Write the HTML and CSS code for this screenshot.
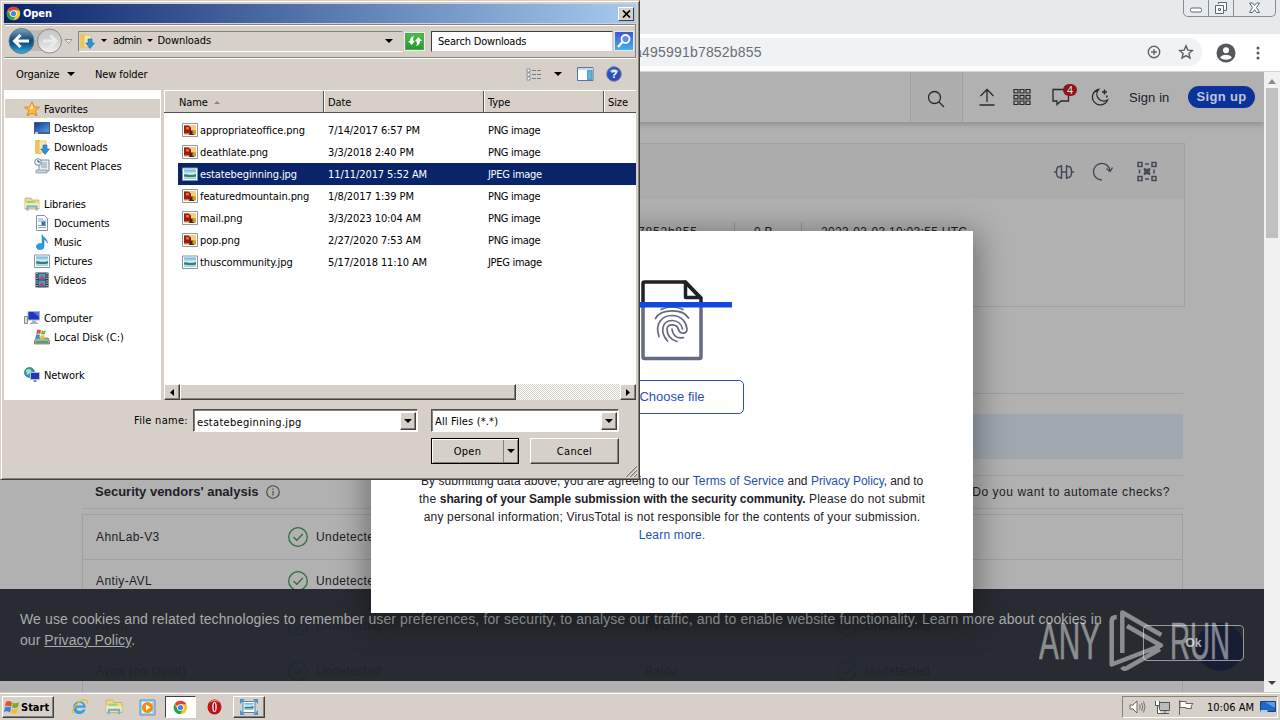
FILE: index.html
```
<!DOCTYPE html>
<html lang="en">
<head>
<meta charset="utf-8">
<title>Open</title>
<link rel="stylesheet" href="styles.css">
</head>
<body>
<svg class="defs" width="0" height="0" aria-hidden="true">
  <defs>
    <linearGradient id="gBack" x1="0" y1="0" x2="0" y2="1"><stop offset="0" stop-color="#7fa6bd"/><stop offset=".45" stop-color="#174a75"/><stop offset=".6" stop-color="#0d548c"/><stop offset="1" stop-color="#35b4e0"/></linearGradient>
    <linearGradient id="gFwd" x1="0" y1="0" x2="0" y2="1"><stop offset="0" stop-color="#c6c6c6"/><stop offset=".5" stop-color="#d2d2d2"/><stop offset="1" stop-color="#f4f4f4"/></linearGradient>
    <linearGradient id="gScreen" x1="0" y1="0" x2="1" y2="1"><stop offset="0" stop-color="#123a8c"/><stop offset="1" stop-color="#5aa6ee"/></linearGradient>
    <linearGradient id="gPic" x1="0" y1="0" x2="0" y2="1"><stop offset="0" stop-color="#5fb0dc"/><stop offset=".5" stop-color="#e4f6f7"/><stop offset="1" stop-color="#8fd0e0"/></linearGradient>
    <symbol id="chrome" viewBox="0 0 16 16">
      <circle cx="8" cy="8" r="7.200" fill="#f6c92b"/>
      <path d="M8 8 1.700 4.400A7.200 7.200 0 0 1 14.300 4.600H8z" fill="#dc4437"/>
      <path d="M1.700 4.400A7.200 7.200 0 0 0 7.600 15.200L10.600 10 5.200 10z" fill="#2c9e55"/>
      <circle cx="8" cy="8" r="3.600" fill="#fff"/><circle cx="8" cy="8" r="2.800" fill="#4a86e0"/>
    </symbol>
    <symbol id="dl" viewBox="0 0 16 16">
      <path d="M1 1h5l1 2v12H1z" fill="#e9c765"/><path d="M5 2h7v12H5z" fill="#f7e7a5" stroke="#d9b74f" stroke-width=".6"/>
      <path d="M9 6h4v4h2.500L11 15.500 6.700 10H9z" fill="#2c93de" stroke="#1a68b0" stroke-width=".6"/>
    </symbol>
    <symbol id="star" viewBox="0 0 16 16"><path d="m8 .8 2.200 5 5.300.4-4 3.500 1.300 5.300L8 12.200 3.300 15l1.200-5.300L.5 6.200l5.300-.4z" fill="#fbb93c" stroke="#d9791c" stroke-width=".8"/><path d="m8 3 1.300 3.500L8 9 5.500 7z" fill="#ffe49a"/></symbol>
    <symbol id="desk" viewBox="0 0 16 16"><path d="M.5 2.500h15v11H.5z" fill="url(#gScreen)" stroke="#44597c"/><path d="M0 12h16v2H0z" fill="#48627f"/><path d="M1 12h3v2H1z" fill="#a8d8e8"/></symbol>
    <symbol id="recent" viewBox="0 0 16 16"><path d="M5 2h10v11H5z" fill="#e7eef4" stroke="#7c8d9c"/><path d="M7 5h6M7 7h6M7 9h6" stroke="#7ea0bc"/><path d="M2 12h11v3H2z" fill="#c8d3dc" stroke="#7c8d9c" stroke-width=".7"/><circle cx="4" cy="4" r="3.300" fill="#eef4f8" stroke="#75869a"/><path d="M4 2v2h2" fill="none" stroke="#345"/></symbol>
    <symbol id="lib" viewBox="0 0 16 16"><path d="M1 2h6l1 2h7v9H1z" fill="#efd98a" stroke="#c2a855" stroke-width=".7"/><path d="M3 5h8v2H3z" fill="#9bd07f"/><path d="M1 7h14v5H1z" fill="#f7e9ad"/><path d="M3.500 14.500V10.500h9v4" fill="none" stroke="#6fb3da" stroke-width="2"/></symbol>
    <symbol id="doc" viewBox="0 0 16 16"><path d="M2.500.5h8l3 3v12h-11z" fill="#fbfdff" stroke="#8593a2"/><path d="M4 4h5M4 6h8M4 10.500h8M4 12.500h8" stroke="#8ea6bd"/><path d="M7.500 6.500h4v4h-4z" fill="#3b6fae"/></symbol>
    <symbol id="music" viewBox="0 0 16 16"><path d="M8 .5c1 3 5 3.500 5.500 8.500-1-2-2-3-3.500-3.400v6.900A3.800 3.200 0 1 1 8 9.800z" fill="#2f9be0" stroke="#1d70b4" stroke-width=".5"/></symbol>
    <symbol id="pic" viewBox="0 0 16 16"><path d="M.5 2h15v12.500H.5z" fill="#fff" stroke="#7f97a3"/><path d="M2 3.500h12V13H2z" fill="url(#gPic)"/><path d="M2 8.500c3-1 4 1.500 12-.5v2.500c-4 1-8 .5-12 0z" fill="#397d79"/></symbol>
    <symbol id="vid" viewBox="0 0 16 16"><path d="M1.500.5h13v15h-13z" fill="#2c3440"/><path d="M4.500 1.500h7v6h-7zM4.500 8.500h7v6h-7z" fill="#4f9cd0"/><path d="m5 7 3-4 3 4zM5 14l3-4 3 4z" fill="#b44d50"/><path d="M3 1v15M13 1v15" stroke="#dfe6ea" stroke-width="1.200" stroke-dasharray="1.200 1.200"/></symbol>
    <symbol id="comp" viewBox="0 0 16 16"><path d="M4 1.500h11.500v8.500H4z" fill="#1f35c4" stroke="#aab4c0"/><path d="m9 2 6 0v5z" fill="#4c71ea"/><path d="M8 10.500h4v2h2v1.500H6v-1.500h2z" fill="#a8b0bb"/><path d="M.5 6.500h3v7h-3z" fill="#dfe3d0" stroke="#80907c"/></symbol>
    <symbol id="disk" viewBox="0 0 16 16"><path d="M2 9h12l1.500 3v3H.5v-3z" fill="#9fb2a3" stroke="#5d7062" stroke-width=".7"/><path d="M2 12h12v2H2z" fill="#5a9d68"/><path d="M3 1q2-1 4 .2L6.300 5Q4.500 4 2.300 5z" fill="#e5552d"/><path d="M7.800 1.500q2 1 4-.2L11 5q-2 1-4 .2z" fill="#78b93e"/><path d="M2 5.700q2-1 4 .2L5.300 9.500q-2-1-4 0z" fill="#3a8de0"/><path d="M6.800 6q2 1 4 0L10 9.700q-2 1-4 0z" fill="#f4bf2f"/></symbol>
    <symbol id="net" viewBox="0 0 16 16"><circle cx="5.500" cy="5.500" r="5" fill="#2a9fb3" stroke="#1c6d8f" stroke-width=".7"/><path d="M2 3q3-2 5 0T3 8z" fill="#a7e0b1"/><path d="M6.500 5.500h9v7h-9z" fill="#1f35c4" stroke="#b8c2cc"/><path d="M9.500 13h3v2h-3z" fill="#8591a8"/></symbol>
    <symbol id="png" viewBox="0 0 16 16"><path d="M.5 1.500h15v13H.5z" fill="#fff" stroke="#8e9aa5"/><path d="M2 3h12v10H2z" fill="#f6cd80"/><path d="M2 3.500h4.500l2.500 2v4l-2 2H2z" fill="#9d1d12"/><path d="M4 5h3v2.500H4z" fill="#e8702c"/><path d="M8 8.500h4V13H7z" fill="#542213"/><path d="M10.500 8.500H14V12h-3.500z" fill="#d79a1c"/></symbol>
    <symbol id="check" viewBox="0 0 22 22"><circle cx="11" cy="11" r="9.300" fill="none" stroke="currentColor" stroke-width="1.300"/><path d="m6.500 11 3.300 3.300 6-6.300" fill="none" stroke="currentColor" stroke-width="1.300"/></symbol>
    <symbol id="tri" viewBox="0 0 8 4"><path d="M0 0h8L4 4z" fill="currentColor"/></symbol>
  </defs>
</svg>

<main class="desktop">
  <section class="browser">
    <div class="tabstrip">
      <div class="winbtns">
        <span class="wb w1"><svg width="14" height="16" viewBox="0 0 14 16"><rect x="1.500" y="8" width="11" height="4" rx="1.500" fill="#fff" stroke="#5c6672"/></svg></span>
        <span class="wb w2"><svg width="14" height="16" viewBox="0 0 14 16"><path d="M4.500 4V2.500h8v8H10M1.500 5.500h8v8h-8z" fill="#fff" stroke="#5c6672"/><path d="M4.500 8.500h2v2h-2z" fill="#fff" stroke="#5c6672"/></svg></span>
        <span class="wb w3"><svg width="13" height="16" viewBox="0 0 13 16"><path d="M1.500 3h3l2 2.500 2-2.500h3L8.500 7.500l3 5h-3l-2-2.700-2 2.700h-3l3-5z" fill="#fff" stroke="#5c6672"/></svg></span>
      </div>
    </div>
    <div class="toolbar">
      <div class="omnibox">
        <span class="url">a495991b7852b855</span>
        <svg width="14" height="14" viewBox="0 0 14 14" fill="none" stroke="#5f6368" stroke-width="1.400"><circle cx="7" cy="7" r="5.700"/><path d="M4 7h6M7 4v6"/></svg>
        <svg width="16" height="16" viewBox="0 0 16 16" fill="none" stroke="#5a5e63" stroke-width="1.400"><path d="m8 1.800 1.800 4.300 4.600.4-3.500 3 1.100 4.500L8 11.600 4 14l1.100-4.500-3.500-3 4.600-.4z"/></svg>
      </div>
      <svg class="avatar" width="20" height="20" viewBox="0 0 20 20"><circle cx="10" cy="10" r="9.500" fill="#54585d"/><circle cx="10" cy="7.200" r="3" fill="#fff"/><path d="M4.200 14.500c1.500-3.600 10-3.600 11.600 0-2.500 3-9 3-11.600 0z" fill="#fff"/></svg>
      <svg width="4" height="14" viewBox="0 0 4 14" fill="#54585d"><circle cx="2" cy="2" r="1.500"/><circle cx="2" cy="7" r="1.500"/><circle cx="2" cy="12" r="1.500"/></svg>
    </div>
    <div class="viewport">
      <div class="page">
        <header class="vt-head">
          <span class="search"><svg width="18" height="18" viewBox="0 0 18 18" fill="none" stroke="#26292e" stroke-width="1.300"><circle cx="7.500" cy="7.500" r="6"/><path d="m12 12 5 5"/></svg></span>
          <svg class="i-up" width="16" height="18" viewBox="0 0 16 18" fill="none" stroke="#26292e" stroke-width="1.300"><path d="M8 14V1.500M1.500 8 8 1.500 14.500 8M.5 17h15"/></svg>
          <svg class="i-grid" width="18" height="18" viewBox="0 0 18 18" fill="none" stroke="#26292e" stroke-width="1.200"><path d="M1 1.500h4v3.500H1zM7 1.500h4v3.500H7zM13 1.500h4v3.500h-4zM1 7.300h4v3.500H1zM7 7.300h4v3.500H7zM13 7.300h4v3.500h-4zM1 13h4v3.500H1zM7 13h4v3.500H7zM13 13h4v3.500h-4z"/></svg>
          <span class="i-chat"><svg width="18" height="18" viewBox="0 0 18 18" fill="none" stroke="#26292e" stroke-width="1.300"><path d="M1 1.500h15.500v11.500H9L5 16.500V13H1z"/></svg><b class="badge">4</b></span>
          <svg class="i-moon" width="18" height="18" viewBox="0 0 18 18" fill="none" stroke="#26292e" stroke-width="1.300"><path d="M7.500 1.500a7.800 7.800 0 1 0 9 10.500A7 7 0 0 1 7.500 1.500z"/><path d="M13.500 1.500v5M11 4h5M15.800 7.500v2" stroke-width="1.500"/></svg>
          <span class="signin">Sign in</span>
          <span class="signup">Sign up</span>
        </header>

        <section class="card">
          <div class="card-top">
            <svg width="20" height="16" viewBox="0 0 20 16" fill="none" stroke="#424a58" stroke-width="1.500"><path d="M0 8h3M8 8h4M17 8h3M5 2.500Q2.500 3 2.500 8T5 13.500M15 2.500q2.500.5 2.500 5.500T15 13.500M7.500 1v14M12.500 1v14M5 2.500h2.500M5 13.500h2.500M12.500 2.500H15M12.500 13.500H15"/></svg>
            <svg width="21" height="19" viewBox="0 0 21 19" fill="none" stroke="#424a58" stroke-width="1.400"><path d="M10 18A8.300 8.300 0 1 1 18 8.500M14.500 6.500 18 9.500l2.500-4"/></svg>
            <svg width="22" height="21" viewBox="0 0 22 21" fill="none" stroke="#424a58" stroke-width="1.500"><path d="M2 1.500h4v4H2zM16 1.500h4v4h-4zM2 15.500h4v4H2zM16 15.500h4v4h-4zM9 3h4M9 18h4M3.500 8.500v4M18 8.500v4"/><path d="m8 7.500 6 6M14 7.500l-6 6" stroke-width="2"/><path d="M9 8.500h4v4H9z" fill="#424a58"/></svg>
          </div>
          <div class="card-meta"><span class="hash">7852b855</span><span class="size">0 B</span><span class="date">2023-03-03 10:03:55 UTC</span></div>
        </section>
        <div class="tabs-line"></div>
        <div class="banner"></div>
        <div class="va-head"><b>Security vendors' analysis</b><svg width="14" height="14" viewBox="0 0 14 14" fill="none" stroke="#474747" stroke-width="1.100"><circle cx="7" cy="7" r="6.300"/><path d="M7 6v4.500M7 3.500V5"/></svg><span class="auto">Do you want to automate checks?</span></div>
        <div class="table">
          <div class="tr"><span class="c1">AhnLab-V3</span><svg class="ck" width="22" height="22"><use href="#check"/></svg><span class="c2">Undetected</span></div>
          <div class="tr"><span class="c1">Antiy-AVL</span><svg class="ck" width="22" height="22"><use href="#check"/></svg><span class="c2">Undetected</span></div>
          <div class="tr"><span class="c1">Avast</span><svg class="ck" width="22" height="22"><use href="#check"/></svg><span class="c2">Undetected</span><span class="c3">AVG</span><svg class="ck" width="22" height="22"><use href="#check"/></svg><span class="c2">Undetected</span></div>
          <div class="tr"><span class="c1">Avira (no cloud)</span><svg class="ck" width="22" height="22"><use href="#check"/></svg><span class="c2">Undetected</span><span class="c3">Baidu</span><svg class="ck" width="22" height="22"><use href="#check"/></svg><span class="c2">Undetected</span></div>
          <div class="tr last"></div>
        </div>

        <div class="cookie">
          <i class="chatdot"></i>
          <p><span class="ck1">We use cookies and related technologies to remember user preferences, for security, to analyse our traffic, and to enable website functionality. Learn more about cookies in</span><br><span class="ck2">our <u>Privacy Policy</u>.</span></p>
          <span class="okbtn">Ok</span>
        </div>
      </div>
      <div class="scroll"><svg width="8" height="5"><path d="M0 5h8L4 0z" fill="#8b8b8b"/></svg><i class="thumb"></i><svg class="dn" width="8" height="4"><path d="M0 0h8L4 4z" fill="#404040"/></svg></div>
    </div>
  </section>

  <footer class="taskbar">
    <span class="start"><svg width="16" height="15" viewBox="0 0 16 15"><path d="M2 2q3-2 6 .3L7 7Q4 5 1 6.500z" fill="#e2532a"/><path d="M9 2.500q3 1.800 6-.2L14 7q-3 1.800-6 .3z" fill="#6fae3b"/><path d="M1 7.500q3-1.500 6 .3L6 12.500Q3 10.500 0 12z" fill="#3a80d6"/><path d="M8 8.200q3 1.800 6-.2l-1 4.700q-3 1.800-6 .3z" fill="#f3bd2c"/></svg><b>Start</b></span>
    <svg class="t-ie" width="18" height="18" viewBox="0 0 18 18"><path d="M14.800 9.800H5.300a3.700 3.700 0 0 0 6.600 1.800h2.600A6.400 6.400 0 1 1 14.800 9.800zM5.400 7.600h6.700a3.400 3.400 0 0 0-6.700 0z" fill="#34a0e2"/><path d="M2.500 15.500C-1.500 13 9-1 16 2.500c1 .8.700 2 .2 3" fill="none" stroke="#efb92b" stroke-width="1.300"/></svg>
    <svg class="t-lib" width="18" height="18"><use href="#lib"/></svg>
    <svg class="t-wmp" width="17" height="17" viewBox="0 0 17 17"><path d="M1 1h15v15H1z" fill="#a6d3ef" stroke="#5a92bd"/><path d="M3 3h10v11H3z" fill="#e9f6fd"/><circle cx="8.500" cy="8.500" r="5.500" fill="#f28a16"/><path d="m7 5.500 4.500 3-4.500 3z" fill="#fff"/></svg>
    <span class="tb-active"><svg width="15" height="15"><use href="#chrome"/></svg></span>
    <svg class="t-op" width="15" height="16" viewBox="0 0 15 16"><ellipse cx="7.500" cy="8" rx="7" ry="7.500" fill="#c01218"/><path d="M3 3q4.500-3 9 0" stroke="#ef7c78" fill="none" stroke-width="1.500"/><ellipse cx="7.500" cy="8" rx="2.200" ry="5" fill="#fff"/><ellipse cx="7.500" cy="8" rx=".9" ry="4" fill="#8d0d12"/></svg>
    <span class="tb-win"><svg width="18" height="16" viewBox="0 0 18 16"><path d="M3 2.500h12v11H3z" fill="#fff" stroke="#4b87bd"/><path d="M4.500 4h9v7h-9z" fill="url(#gPic)"/><path d="M4.500 8c3-1 5 .5 9-1v2.500h-9z" fill="#397d79"/><path d="M0 0h5L0 5zM18 0h-5l5 5zM0 16h5l-5-5zM18 16h-5l5-5z" fill="#4a93cf"/></svg></span>
    <div class="tray">
      <svg width="17" height="14" viewBox="0 0 17 14"><path d="M1 5h3l4-4v12L4 9H1z" fill="#fff" stroke="#666"/><path d="M10.500 4.500q1.500 2.500 0 5M12.500 3q2.500 4 0 8M14.500 1.500q3 5.500 0 11" fill="none" stroke="#666" stroke-width=".9"/></svg>
      <svg width="16" height="15" viewBox="0 0 16 15"><path d="M5.500 2.500h10v8h-10z" fill="#bbb" stroke="#555"/><path d="M7 13.500h8M11 10.500v3" stroke="#555"/><path d="M1.500 1v4.500h4V1M3.500 5.500v8H7" fill="#fff" stroke="#555"/></svg>
      <svg width="16" height="15" viewBox="0 0 16 15"><path d="M1.500 0v15" stroke="#666"/><path d="M2 1.500h6v2h7q-3 2-1.500 5H8v-1H2z" fill="#fff" stroke="#666"/></svg>
      <span class="clock">10:06 AM</span>
      <svg width="16" height="12" viewBox="0 0 16 12"><path d="M.5.5h15v10H.5z" fill="#2367c4" stroke="#1c3f78"/><path d="M.5 9h7v2.500h-7z" fill="#a9cdf0"/><path d="M5 1h10v6z" fill="#5c9be6"/></svg>
    </div>
  </footer>

  <section class="modal">
    <svg class="fileart" width="120" height="81" viewBox="0 0 120 81" fill="none">
      <path d="M31 28V3.500q0-1.500 1.500-1.500H73l16 16v9" stroke="#1f2228" stroke-width="3.500"/>
      <path d="M73.500 2v15.500H88z" stroke="#1f2228" stroke-width="3.500" stroke-linejoin="round"/>
      <path d="M31 27v50q0 1.500 1.500 1.500h55q1.500 0 1.500-1.500V27" stroke="#646a80" stroke-width="3.500"/>
      <g stroke="#646a80" stroke-width="1.700" stroke-linecap="round">
        <path d="M49 29.500q11-5 22 0M43.500 38.500C49 28.500 71 28.500 76.500 38"/>
        <path d="M47 56.500C42.500 44 50 35.500 60 35.500S74.500 43 75 49c.2 5.500-7 5.500-8.500.5"/>
        <path d="M55.500 61C47.500 52 50 40.500 60 40.500c5.500 0 9.500 3.500 10.500 8.500"/>
        <path d="M71.500 57.500c-7 2-11-3-11.500-8.500"/>
        <path d="M65 61.500c-7-2-10-7-10-12.500.5-5.500 10-5.500 11.500.5"/>
      </g>
      <path d="M0 22h120v5.500H0z" fill="#1048e0"/>
    </svg>
    <span class="choose">Choose file</span>
    <div class="terms">
      <div class="l1">By submitting data above, you are agreeing to our <a class="tos">Terms of Service</a> and <a class="pp">Privacy Policy</a><span class="tail">, and to</span></div>
      <div class="l2">the <b>sharing of your Sample submission with the security community.</b> Please do not submit</div>
      <div class="l3">any personal information; VirusTotal is not responsible for the contents of your submission.</div>
      <div class="l4"><a>Learn more.</a></div>
    </div>
  </section>

  <svg class="mark" width="200" height="66" viewBox="0 0 200 66">
    <g fill="#fff" stroke="#fff" stroke-width=".5" font-family="'Liberation Sans', sans-serif" font-size="51">
      <text x="0" y="50" textLength="61" lengthAdjust="spacingAndGlyphs">ANY</text>
      <text x="131" y="50" textLength="60" lengthAdjust="spacingAndGlyphs">RUN</text>
    </g>
    <path d="M83.300 44V3.500l39 22.500M88 17l34 19.500L72.700 55.500V12q0-4 5-4M83 58q2 3 5 1l33-19" fill="none" stroke="#fff" stroke-width="4.500" stroke-linejoin="round"/>
  </svg>

  <section class="dialog">
    <div class="titlebar"><svg width="15" height="15"><use href="#chrome"/></svg><b>Open</b><span class="xbtn"><svg width="9" height="8" viewBox="0 0 9 8"><path d="m1 .5 7 7M8 .5l-7 7" stroke="#000" stroke-width="1.700"/></svg></span></div>
    <div class="navband">
      <svg class="navbtns" width="66" height="28" viewBox="0 0 66 28">
        <path d="M13 3h35v5q-8 7 0 13v3H13z" fill="#bdbbb8"/>
        <circle cx="14.500" cy="14" r="12.500" fill="url(#gBack)" stroke="#63798a"/><path d="M8 14h14M13.500 8l-6 6 6 6" fill="none" stroke="#fff" stroke-width="3"/>
        <circle cx="42.500" cy="14" r="12" fill="url(#gFwd)" stroke="#8b8b8b"/><path d="M36 14h13M43.500 8.500l5.500 5.500-5.500 5.500" fill="none" stroke="#ebebeb" stroke-width="3"/>
        <path d="M58 12.500h7l-3.500 4z" fill="#eee" stroke="#8a8a8a" stroke-width=".9"/>
      </svg>
      <div class="addr"><svg width="16" height="16"><use href="#dl"/></svg><svg class="ar a1" width="6" height="3"><use href="#tri"/></svg><span class="admin">admin</span><svg class="ar a2" width="6" height="3"><use href="#tri"/></svg><span>Downloads</span><svg class="ar a3" width="8" height="4"><use href="#tri"/></svg></div>
      <span class="refresh"><svg width="16" height="12" viewBox="0 0 16 12"><path d="M1 6h2q0-4 4-5-1.500 2.500-.5 5H8l-3.500 4zM15 6h-2q0 4-4 5 1.500-2.500.5-5H8l3.500-4z" fill="#fff"/></svg></span>
      <div class="searchbox">Search Downloads</div>
      <span class="go"><svg width="16" height="16" viewBox="0 0 16 16"><circle cx="9.500" cy="6" r="4" fill="#5b8cf0" stroke="#fff" stroke-width="1.800"/><path d="m6.500 9-4.500 5" stroke="#fff" stroke-width="2.400"/></svg></span>
    </div>
    <div class="cmdbar">
      <span class="org">Organize</span><svg class="ar" width="8" height="4"><use href="#tri"/></svg><span class="newf">New folder</span>
      <svg class="v1" width="15" height="13" viewBox="0 0 15 13"><path d="M1 1h3v3H1zM1 5h3v3H1zM1 9h3v3H1z" fill="#fff" stroke="#7d8794" stroke-width=".9"/><path d="M6 2.500h9M6 6.500h9M6 10.500h9" stroke="#757d88" stroke-dasharray="4 1"/></svg>
      <svg class="v2" width="8" height="4"><use href="#tri"/></svg>
      <svg class="v3" width="17" height="14" viewBox="0 0 17 14"><path d="M.5.5h15.500v13H.5z" fill="#fff" stroke="#4f77a3"/><path d="M1 1h15v2H1z" fill="#c5d9ec"/><path d="M10.500 3.500H15v9h-4.500z" fill="#5ab5da" stroke="#4f88ab" stroke-width=".8"/></svg>
      <svg class="v4" width="16" height="16" viewBox="0 0 16 16"><circle cx="8" cy="8" r="7.300" fill="#2b4fb8" stroke="#6f7fa4"/><path d="M3 5q5-4 10 0-5 3-10 0" fill="#86a5e8"/><text x="8" y="12" text-anchor="middle" font-family="Liberation Sans, sans-serif" font-weight="700" font-size="11" fill="#fff">?</text></svg>
    </div>
    <div class="body">
      <nav class="side">
        <div class="n top hl"><svg width="16" height="16"><use href="#star"/></svg><span>Favorites</span></div>
        <div class="n"><svg width="16" height="16"><use href="#desk"/></svg><span>Desktop</span></div>
        <div class="n"><svg width="16" height="16"><use href="#dl"/></svg><span>Downloads</span></div>
        <div class="n"><svg width="16" height="16"><use href="#recent"/></svg><span>Recent Places</span></div>
        <div class="n"></div>
        <div class="n top"><svg width="16" height="16"><use href="#lib"/></svg><span>Libraries</span></div>
        <div class="n"><svg width="16" height="16"><use href="#doc"/></svg><span>Documents</span></div>
        <div class="n"><svg width="16" height="16"><use href="#music"/></svg><span>Music</span></div>
        <div class="n"><svg width="16" height="16"><use href="#pic"/></svg><span>Pictures</span></div>
        <div class="n"><svg width="16" height="16"><use href="#vid"/></svg><span>Videos</span></div>
        <div class="n"></div>
        <div class="n top"><svg width="16" height="16"><use href="#comp"/></svg><span>Computer</span></div>
        <div class="n"><svg width="16" height="16"><use href="#disk"/></svg><span>Local Disk (C:)</span></div>
        <div class="n"></div>
        <div class="n top"><svg width="16" height="16"><use href="#net"/></svg><span>Network</span></div>
      </nav>
      <div class="list">
        <div class="lh"><span class="h h1">Name<svg width="6" height="3"><path d="M0 3h6L3 0z" fill="#8a8680"/></svg></span><span class="h h2">Date</span><span class="h h3">Type</span><span class="h h4">Size</span></div>
        <div class="rows">
          <div class="r"><svg width="16" height="16"><use href="#png"/></svg><span class="f1">appropriateoffice.png</span><span class="f2">7/14/2017 6:57 PM</span><span class="f3">PNG image</span></div>
          <div class="r"><svg width="16" height="16"><use href="#png"/></svg><span class="f1">deathlate.png</span><span class="f2">3/3/2018 2:40 PM</span><span class="f3">PNG image</span></div>
          <div class="r sel"><svg width="16" height="16"><use href="#pic"/></svg><span class="f1">estatebeginning.jpg</span><span class="f2">11/11/2017 5:52 AM</span><span class="f3">JPEG image</span></div>
          <div class="r"><svg width="16" height="16"><use href="#png"/></svg><span class="f1">featuredmountain.png</span><span class="f2">1/8/2017 1:39 PM</span><span class="f3">PNG image</span></div>
          <div class="r"><svg width="16" height="16"><use href="#png"/></svg><span class="f1">mail.png</span><span class="f2">3/3/2023 10:04 AM</span><span class="f3">PNG image</span></div>
          <div class="r"><svg width="16" height="16"><use href="#png"/></svg><span class="f1">pop.png</span><span class="f2">2/27/2020 7:53 AM</span><span class="f3">PNG image</span></div>
          <div class="r"><svg width="16" height="16"><use href="#pic"/></svg><span class="f1">thuscommunity.jpg</span><span class="f2">5/17/2018 11:10 AM</span><span class="f3">JPEG image</span></div>
        </div>
        <div class="hscroll"><span class="raised sb"><svg width="4" height="7"><path d="M4 0v7L0 3.500z"/></svg></span><span class="raised hthumb"></span><span class="raised sb end"><svg width="4" height="7"><path d="M0 0v7l4-3.500z"/></svg></span></div>
      </div>
    </div>
    <div class="form">
      <div class="frow"><label>File name:</label><div class="combo c-name"><span>estatebeginning.jpg</span><i class="raised"><svg width="8" height="4"><use href="#tri"/></svg></i></div><div class="combo c-type"><span>All Files (*.*)</span><i class="raised"><svg width="8" height="4"><use href="#tri"/></svg></i></div></div>
      <div class="frow2"><span class="openbtn"><span>Open</span><i><svg width="8" height="4"><use href="#tri"/></svg></i></span><span class="raised cancel">Cancel</span></div>
    </div>
    <svg class="grip" width="12" height="12" viewBox="0 0 12 12"><path d="M1 12 12 1M5 12l7-7M9 12l3-3" stroke="#7d7a74" stroke-width="1.400"/><path d="M0 12 12 0M4 12l8-8M8 12l4-4" stroke="#fff" stroke-width=".7"/></svg>
  </section>
</main>
</body>
</html>
```
FILE: styles.css
```
* { box-sizing: border-box; }
body { margin: 0; font-family: "Liberation Sans", Arial, sans-serif; color: #1d2026; }
svg { display: block; flex: none; }
.defs { position: absolute; }
.desktop { position: relative; width: 1280px; height: 720px; overflow: hidden; display: flex; flex-direction: column; white-space: nowrap; }

/* browser chrome */
.browser { height: 692px; display: flex; flex-direction: column; }
.tabstrip { height: 34px; background: #e7eaed; display: flex; justify-content: flex-end; padding-right: 4px; }
.winbtns { height: 17px; width: 93px; display: flex; border: 1px solid #858c94; border-top: 0; border-radius: 0 0 5px 5px; }
.wb { display: flex; justify-content: center; }
.w1 { width: 25px; border-right: 1px solid #858c94; }
.w2 { width: 25px; border-right: 1px solid #858c94; }
.w3 { flex: 1; }
.toolbar { height: 38px; background: #fff; border-bottom: 1px solid #d2d4d7; display: flex; align-items: center; padding-right: 20px; }
.omnibox { flex: 1; height: 28px; margin: 0 14px 1px 0; padding: 0 8px 0 640px; border-radius: 0 14px 14px 0; background: #f0f3f6; display: flex; align-items: center; gap: 17px; max-width: 1202px; }
.url { flex: 1; margin-left: -6px; font-size: 14px; letter-spacing: .2px; color: #6a6e74; }
.avatar { margin-right: 20px; }
.viewport { flex: 1; display: flex; min-height: 0; }
.page { width: 1264px; background: #b1b1b1; display: flex; flex-direction: column; overflow: hidden; position: relative; }
.scroll { width: 16px; background: #f1f1f1; display: flex; flex-direction: column; align-items: center; padding: 7px 0 7px; }
.thumb { width: 12px; height: 150px; margin-top: 4px; background: #c1c1c1; }
.dn { margin-top: auto; }

/* site header */
.vt-head { height: 50px; flex: none; display: flex; align-items: center; padding: 0 9px 0 910px; box-shadow: 0 2px 6px rgba(0,0,0,.22); }
.search { width: 53px; height: 50px; display: flex; align-items: center; justify-content: center; border-left: 1px solid #a0a0a0; border-right: 1px solid #a0a0a0; background: #aeaeae; padding: 3px 2px 0 0; }
.i-up { margin-left: 16px; }
.i-grid { margin-left: 18px; }
.i-chat { margin-left: 21px; position: relative; }
.i-moon { margin-left: 21px; }
.badge { position: absolute; left: 11px; top: -4px; width: 14px; height: 12px; border-radius: 6px; background: #8e1519; color: #ddd; font: 11px/12px "Liberation Sans", sans-serif; text-align: center; }
.signin { margin-left: 20px; width: 59px; font-size: 13px; letter-spacing: .1px; }
.signup { width: 67px; height: 22px; border-radius: 11px; background: #0a3298; color: #bdc6de; font-weight: 700; font-size: 13px; line-height: 22px; text-align: center; letter-spacing: .3px; }

/* report */
.card { flex: none; margin: 21px 79px 0 82px; height: 164px; border: 1px solid #a0a0a0; }
.card-top { height: 55px; background: #acacac; display: flex; align-items: center; justify-content: flex-end; gap: 18px; padding-right: 26px; }
.card-top svg:last-child { margin-left: 5px; }
.card-meta { display: flex; height: 24px; margin-top: 23px; font-size: 12px; line-height: 21px; padding-left: 555px; letter-spacing: .3px; }
.hash { width: 97px; border-right: 1px solid #9a9a9a; letter-spacing: .8px; }
.size { width: 67px; padding-left: 19px; border-right: 1px solid #9a9a9a; }
.date { padding-left: 19px; }
.tabs-line { flex: none; height: 87px; border-bottom: 1px solid #9f9f9f; margin: 0 81px 0 82px; }
.banner { flex: none; height: 45px; margin: 20px 81px 0 82px; background: #9fa7af; }
.va-head { flex: none; margin: 16px 81px 0 82px; height: 34px; border-top: 1px solid #a2a2a2; border-bottom: 1px solid #a2a2a2; display: flex; align-items: center; gap: 7px; padding: 0 13px 1px; font-size: 13px; letter-spacing: 0; }
.auto { margin-left: auto; font-size: 12px; letter-spacing: .55px; }
.table { margin: 5px 81px 0 82px; border: 1px solid #a0a0a0; flex: none; }
.tr { display: flex; align-items: center; height: 44.600px; border-bottom: 1px solid #a0a0a0; padding-left: 13px; font-size: 12px; letter-spacing: .4px; }
.tr span { flex: none; }
.c1 { width: 191px; }
.c2 { margin-left: 7px; width: 322px; }
.c3 { width: 191px; margin-left: 7px; }
.ck { color: #2d6e41; }
.cookie { position: absolute; left: 0; top: 517px; width: 1264px; height: 92px; background: rgba(31,35,41,.94); color: #a9abad; display: flex; justify-content: space-between; padding: 20px; }
.cookie p { margin: 0; font-size: 14px; line-height: 21px; letter-spacing: .12px; position: relative; }
.ck2 { letter-spacing: .05px; }
.okbtn { position: relative; width: 101px; height: 36px; margin-top: 16px; border: 1px solid #96989a; border-radius: 4px; text-align: center; font: 700 12px/34px "Liberation Sans", sans-serif; color: #b5b7b9; }
.chatdot { position: absolute; left: 1196px; top: 34px; width: 48px; height: 48px; border-radius: 50%; background: #171e33; }

/* upload modal */
.modal { position: absolute; left: 371px; top: 231px; width: 602px; height: 382px; background: #fff; box-shadow: 0 6px 30px 4px rgba(0,0,0,.38); display: flex; flex-direction: column; align-items: center; padding-top: 49px; }
.choose { margin-top: 19px; width: 144px; height: 34px; border: 1px solid #2a50b8; border-radius: 5px; color: #2a50b8; font-size: 13px; line-height: 32px; text-align: center; letter-spacing: 0; }
.terms { margin-top: 58px; text-align: center; font-size: 12px; line-height: 18px; letter-spacing: .18px; }
.terms a { color: #2350b0; }
.l1 { letter-spacing: .06px; }
.tos { letter-spacing: .12px; }
.pp, .tail { letter-spacing: -.08px; }
.l2 { letter-spacing: .2px; }
.l2 b { letter-spacing: -.09px; }
.mark { position: absolute; left: 1039px; top: 609px; opacity: .46; }

/* taskbar */
.taskbar { height: 28px; background: #d6d0c8; border-top: 1px solid #d6d0c8; box-shadow: inset 0 1px #fff; display: flex; align-items: center; padding: 3px 2px 2px; }
.start { width: 52px; height: 22px; display: flex; align-items: center; gap: 1px; padding-left: 1px; border: 1px solid; border-color: #fff #404040 #404040 #fff; box-shadow: inset -1px -1px #86837c; font: 11px "DejaVu Sans Condensed", sans-serif; color: #000; }
.t-ie { margin-left: 17px; }
.t-lib { margin-left: 16px; }
.t-wmp { margin-left: 16px; }
.tb-active { margin-left: 9px; width: 31px; height: 22px; background: #fff; border: 1px solid; border-color: #404040 #fff #fff #404040; display: flex; align-items: center; justify-content: center; }
.t-op { margin-left: 11px; }
.tb-win { margin-left: 11px; width: 32px; height: 22px; border: 1px solid; border-color: #fff #404040 #404040 #fff; box-shadow: inset -1px -1px #86837c; display: flex; align-items: center; justify-content: center; }
.tray { margin-left: auto; width: 156px; height: 22px; border: 1px solid; border-color: #86837c #fff #fff #86837c; display: flex; align-items: center; padding: 0 0 0 6px; gap: 8px; font: 11px "DejaVu Sans Condensed", sans-serif; color: #000; }
.clock { width: 46px; margin: 0 -1px 0 5px; }

/* file dialog */
.dialog { position: absolute; left: 0; top: 0; width: 640px; height: 480px; background: #d6d0c8; border: 1px solid; border-color: #d6d0c8 #404040 #404040 #d6d0c8; box-shadow: inset 1px 1px #fff, inset -1px -1px #86837c; padding: 3px 3px 2px 3px; display: flex; flex-direction: column; font: 11px/14px "DejaVu Sans Condensed", sans-serif; color: #000; letter-spacing: -.1px; }
.titlebar { height: 19px; background: linear-gradient(90deg, #0a246a, #a6caf0); display: flex; align-items: center; padding: 0 2px 0 2px; gap: 2px; color: #fff; }
.xbtn { margin-left: auto; width: 16px; height: 14px; background: #d6d0c8; border: 1px solid; border-color: #fff #404040 #404040 #fff; display: flex; align-items: center; justify-content: center; }
.navband { height: 34px; margin-top: 1px; border: 1px solid; border-color: #86837c #86837c #86837c #d6d0c8; box-shadow: inset 0 1px #fff, 0 1px #fff; display: flex; align-items: center; padding-left: 2px; }
.navband > * { flex: none; }
.addr { margin-left: 5px; width: 325px; height: 21px; border: 1px solid; border-color: #86837c #d6d0c8 #fff #86837c; display: flex; align-items: center; padding-bottom: 1px; }
.addr .a1 { margin: 0 6px 0 6px; }
.addr .a2 { margin: 0 5px 0 5px; }
.addr .a3 { margin-left: auto; margin-right: 9px; }
.addr > svg:first-child { margin-left: 0; }
.admin { letter-spacing: -.5px; }
.refresh { margin-left: 1px; width: 21px; height: 19px; background: linear-gradient(#4cc04c, #1f9a2a); border: 1px solid #eee; outline: 1px solid #5aa05a; outline-offset: -2px; display: flex; align-items: center; justify-content: center; }
.searchbox { margin-left: 6px; width: 182px; height: 21px; background: #fff; border: 1px solid; border-color: #404040 #d6d0c8 #d6d0c8 #404040; padding: 3px 6px; letter-spacing: -.2px; }
.go { margin-left: 1px; width: 20px; height: 20px; background: linear-gradient(#3c55d8, #3fb4ee); border: 1px solid #e8e8f4; display: flex; align-items: center; justify-content: center; }
.cmdbar { height: 32px; display: flex; align-items: center; padding-left: 12px; }
.cmdbar span { padding-top: 1px; }
.org { width: 51px; }
.newf { margin-left: 20px; }
.v1 { margin-left: auto; }
.v2 { margin-left: 13px; }
.v3 { margin-left: 15px; }
.v4 { margin: 0 15px 0 12px; }
.cmdbar .v4 { margin-right: 14.500px; }
.body { height: 310px; display: flex; }
.side { width: 157px; background: #fff; padding-top: 9px; margin-right: 3px; }
.n { height: 19px; display: flex; align-items: center; gap: 4px; padding-left: 30px; }
.n span { padding-top: 2px; }
.top { padding-left: 20px; }
.hl { background: #d6d0c8; margin: 0 1px; padding-left: 19px; }
.list { flex: 1; background: #fff; display: flex; flex-direction: column; }
.lh { height: 23px; display: flex; background: #d6d0c8; border-bottom: 1px solid #55524c; border-top: 1px solid #fff; }
.h { display: flex; align-items: center; gap: 6px; padding-top: 2px; border-right: 1px solid #55524c; box-shadow: inset 1px 0 #fff; }
.h1 { width: 160px; padding-left: 15px; }
.h2 { width: 160px; padding-left: 4px; }
.h3 { width: 120px; padding-left: 4px; }
.h4 { padding-left: 4px; border: 0; flex: 1; }
.rows { flex: 1; padding: 6px 0 0 14px; }
.r { height: 22px; display: flex; align-items: center; padding-left: 4px; }
.r span { padding-top: 2px; }
.r .f1 { width: 130px; padding-left: 2px; }
.f2 { width: 160px; }
.f3 { letter-spacing: -.3px; }
.sel { background: #0a246a; color: #fff; }
.raised { background: #d6d0c8; border: 1px solid; border-color: #fff #404040 #404040 #fff; box-shadow: inset -1px -1px #86837c; display: flex; align-items: center; justify-content: center; }
.hscroll { height: 16px; display: flex; background: repeating-conic-gradient(#fff 0 25%, #d6d0c8 0 50%) 0 0/2px 2px; }
.sb { width: 16px; }
.hthumb { width: 336px; }
.end { margin-left: auto; }
.form { padding-top: 9px; }
.frow { display: flex; height: 23px; }
.frow label { width: 184px; text-align: right; margin: 5px 5px 0 0; letter-spacing: .3px; }
.combo { display: flex; background: #fff; height: 23px; border: 1px solid; border-color: #55524c #fff #fff #55524c; box-shadow: inset 1px 1px #86837c; padding: 2px 1px 0 3px; }
.combo span { flex: 1; line-height: 19px; }
.combo i { width: 16px; height: 18px; }
.c-name { width: 225px; }
.c-name span { letter-spacing: .3px; padding-top: 1px; }
.c-type { width: 188px; margin-left: 13px; letter-spacing: .15px; }
.frow2 { display: flex; margin: 6px 0 0 427px; height: 26px; letter-spacing: .3px; }
.openbtn { width: 88px; border: 1px solid #000; box-shadow: inset 1px 1px #fff, inset -1px -1px #86837c; display: flex; align-items: center; }
.openbtn span { flex: 1; text-align: center; padding-top: 1px; }
.openbtn i { width: 15px; height: 22px; border-left: 1px solid #86837c; display: flex; align-items: center; justify-content: center; }
.cancel { width: 89px; margin-left: 11px; padding-top: 1px; }
.grip { position: absolute; right: 2px; bottom: 2px; }
```
